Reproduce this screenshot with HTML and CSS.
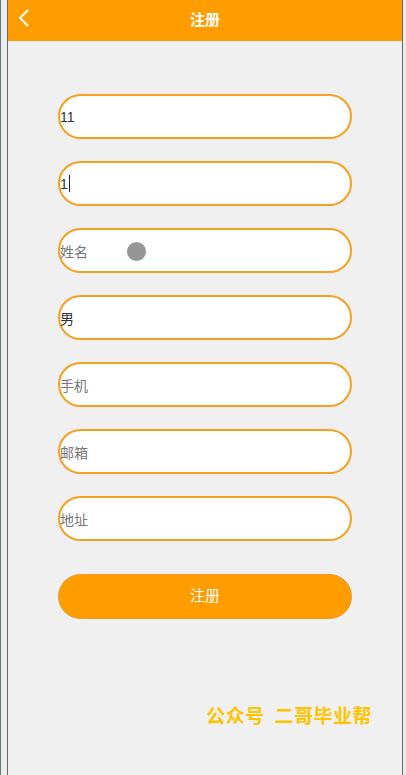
FILE: index.html
```html
<!DOCTYPE html>
<html lang="zh">
<head>
<meta charset="utf-8">
<title>注册</title>
<link rel="stylesheet" href="styles.css">
</head>
<body>
<div class="frame">
  <header class="bar">
    <svg class="back" width="14" height="20" viewBox="0 0 14 20"><path d="M11 2 L3 10 L11 18" fill="none" stroke="#fff" stroke-width="2"/></svg>
    <div class="title">注册</div>
  </header>
  <main class="form">
    <div class="field"><span class="val">11</span></div>
    <div class="field"><span class="val">1</span><span class="caret"></span></div>
    <div class="field"><span class="ph">姓名</span><span class="dot"></span></div>
    <div class="field"><span class="val">男</span></div>
    <div class="field"><span class="ph">手机</span></div>
    <div class="field"><span class="ph">邮箱</span></div>
    <div class="field"><span class="ph">地址</span></div>
    <button class="submit">注册</button>
  </main>
  <footer class="foot">公众号&nbsp;&nbsp;二哥毕业帮</footer>
</div>
</body>
</html>
```
FILE: styles.css
```css
html, body { margin: 0; padding: 0; }
body {
  width: 406px;
  height: 775px;
  box-sizing: border-box;
  background: #ececec;
  border-left: 1px solid #5d7878;
  padding-left: 6px;
  overflow: hidden;
  font-family: "Noto Sans CJK SC", "Liberation Sans", sans-serif;
}
.frame {
  width: 394px;
  height: 775px;
  background: #f0f0f0;
  border-left: 1px solid #6a6a6a;
  border-right: 1px solid #6a6a6a;
  display: flex;
  flex-direction: column;
}
.bar {
  height: 41px;
  background: #ff9c00;
  position: relative;
  display: flex;
  align-items: center;
  justify-content: center;
}
.back { position: absolute; left: 9px; top: 8px; }
.title {
  color: #fff;
  font-weight: bold;
  font-size: 15px;
  margin-top: -5px;
}
.form {
  display: flex;
  flex-direction: column;
  align-items: center;
  padding-top: 53px;
  gap: 22px;
}
.field {
  width: 294px;
  height: 45px;
  box-sizing: border-box;
  border: 2px solid #f4a020;
  border-radius: 23px;
  background: #fff;
  display: flex;
  align-items: center;
  font-size: 14px;
  position: relative;
}
.val { color: #333; font-family: "Liberation Sans", "Noto Sans CJK SC", sans-serif; }
.ph { color: #777; }
.caret { display: inline-block; width: 1px; height: 17px; background: #222; margin-left: 1px; }
.dot {
  position: absolute;
  left: 67px;
  top: 12px;
  width: 19px;
  height: 19px;
  border-radius: 50%;
  background: #959595;
}
.submit {
  margin-top: 11px;
  width: 294px;
  height: 45px;
  border: 1px solid #e89a30;
  border-radius: 23px;
  background: #ff9c00;
  color: #fff;
  font-size: 15px;
  font-family: "Noto Sans CJK SC", sans-serif;
  padding: 0 0 4px;
}
.foot {
  margin-top: 82px;
  text-align: right;
  padding-right: 30px;
  color: #ffc400;
  font-weight: bold;
  font-size: 19px;
  letter-spacing: 0.5px;
}
```
